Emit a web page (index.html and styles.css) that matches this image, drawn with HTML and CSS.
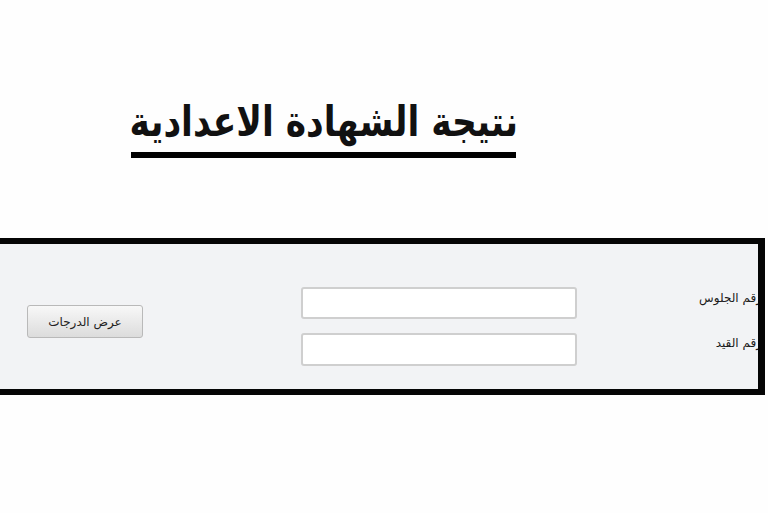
FILE: index.html
```html
<!DOCTYPE html>
<html lang="ar">
<head>
<meta charset="utf-8">
<link rel="stylesheet" href="styles.css">
<title>نتيجة الشهادة الاعدادية</title>
</head>
<body>
<div class="page">
  <div class="head">
    <h1 class="title"><span class="title-text">نتيجة الشهادة الاعدادية</span></h1>
  </div>
  <div class="panel">
    <div class="form">
      <button class="btn" type="button">عرض الدرجات</button>
      <input class="field f1" type="text">
      <input class="field f2" type="text">
      <div class="label l1">رقم الجلوس</div>
      <div class="label l2">رقم القيد</div>
    </div>
  </div>
</div>
</body>
</html>
```
FILE: styles.css
```css
html, body {
  margin: 0;
  padding: 0;
  background: #fefefe;
}
.page {
  width: 768px;
  height: 513px;
  overflow: hidden;
  font-family: "DejaVu Sans", "Liberation Sans", sans-serif;
}
.head {
  height: 238px;
  padding: 95px 0 0 131px;
  box-sizing: border-box;
}
.title {
  display: flex;
  justify-content: center;
  margin: 0;
  width: 385px;
  white-space: nowrap;
  font-size: 42px;
  font-weight: bold;
  line-height: 54px;
  color: #111;
  direction: rtl;
  border-bottom: 6px solid #000;
  padding-bottom: 3px;
}
.title-text {
  flex: none;
  transform: scaleX(0.82);
}
.panel {
  width: 758px;
  height: 145px;
  border: 7px solid #050505;
  border-left: none;
  border-top-width: 6px;
  border-bottom-width: 6px;
  background: #f2f3f5;
  overflow: hidden;
}
.form {
  display: grid;
  grid-template-columns: 116px 158px 276px 180px;
  grid-template-rows: 32px 33px;
  row-gap: 14px;
  padding: 43px 0 0 27px;
}
.btn {
  grid-column: 1;
  grid-row: 1 / 3;
  align-self: center;
  height: 33px;
  margin-bottom: 10px;
  border: 1px solid #b9b9b9;
  border-radius: 3px;
  background: linear-gradient(#f8f8f8, #dcdcdc);
  font-family: "DejaVu Sans", sans-serif;
  font-size: 12px;
  color: #222;
  direction: rtl;
  padding: 0;
}
.field {
  grid-column: 3;
  box-sizing: border-box;
  width: 276px;
  height: 100%;
  margin: 0;
  border: 2px solid #cfcfcf;
  border-radius: 3px;
  background: #fff;
}
.f1 { grid-row: 1; }
.f2 { grid-row: 2; }
.label {
  grid-column: 4;
  direction: rtl;
  text-align: right;
  font-size: 12px;
  color: #1a1a1a;
  margin-right: -5px;
}
.l1 { grid-row: 1; padding-top: 4px; }
.l2 { grid-row: 2; padding-top: 3px; }
```
